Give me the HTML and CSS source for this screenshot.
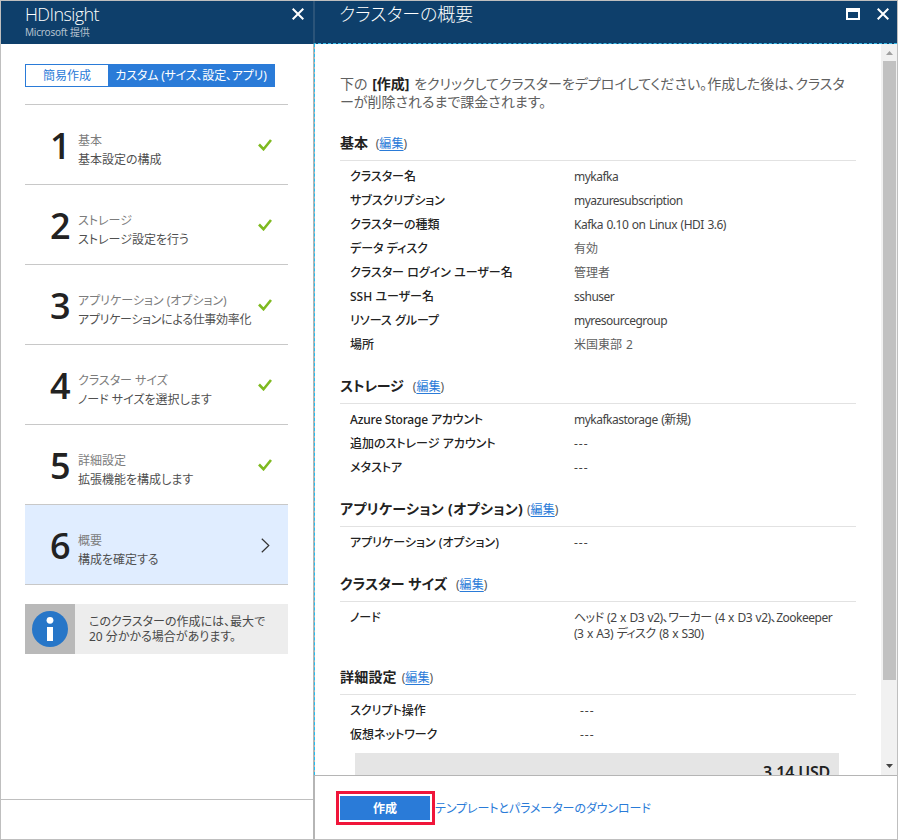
FILE: index.html
```html
<!DOCTYPE html>
<html lang="ja">
<head>
<meta charset="utf-8">
<title>HDInsight</title>
<link rel="stylesheet" href="styles.css">
</head>
<body>
<div class="portal">
  <aside class="wizard">
    <header class="bar">
      <div>
        <h1 class="latin-title">HDInsight</h1>
        <p class="publisher">Microsoft 提供</p>
      </div>
      <svg class="close" width="12" height="12" viewBox="0 0 12 12"><path d="M.7.7l10.6 10.6M11.3.7L.7 11.3"/></svg>
    </header>
    <div class="wizard-body">
      <div class="tabs"><span class="tab">簡易作成</span><span class="tab on">カスタム (サイズ、設定、アプリ)</span></div>
      <ol class="steps">
        <li class="step"><b>1</b><div><p>基本</p><p class="desc">基本設定の構成</p></div><svg class="check" width="14" height="12" viewBox="0 0 14 12"><path d="M1 5.5l4.5 4.7L13 1"/></svg></li>
        <li class="step"><b>2</b><div><p>ストレージ</p><p class="desc">ストレージ設定を行う</p></div><svg class="check" width="14" height="12" viewBox="0 0 14 12"><path d="M1 5.5l4.5 4.7L13 1"/></svg></li>
        <li class="step"><b>3</b><div><p>アプリケーション (オプション)</p><p class="desc long">アプリケーションによる仕事効率化</p></div><svg class="check" width="14" height="12" viewBox="0 0 14 12"><path d="M1 5.5l4.5 4.7L13 1"/></svg></li>
        <li class="step"><b>4</b><div><p>クラスター サイズ</p><p class="desc">ノード サイズを選択します</p></div><svg class="check" width="14" height="12" viewBox="0 0 14 12"><path d="M1 5.5l4.5 4.7L13 1"/></svg></li>
        <li class="step"><b>5</b><div><p>詳細設定</p><p class="desc">拡張機能を構成します</p></div><svg class="check" width="14" height="12" viewBox="0 0 14 12"><path d="M1 5.5l4.5 4.7L13 1"/></svg></li>
        <li class="step current"><b>6</b><div><p>概要</p><p class="desc">構成を確定する</p></div><svg class="chevron" width="9" height="15" viewBox="0 0 9 15"><path d="M.8.8l7 6.7-7 6.7"/></svg></li>
      </ol>
      <div class="notice">
        <div class="notice-icon"><svg width="36" height="36" viewBox="0 0 36 36"><circle cx="18" cy="18" r="18" fill="#2776c8"/><circle cx="18" cy="9.3" r="3.4" fill="#fff"/><path d="M15 16h6v14h-6z" fill="#fff"/></svg></div>
        <p>このクラスターの作成には、最大で<br>20 分かかる場合があります。</p>
      </div>
    </div>
    <footer class="wizard-foot"></footer>
  </aside>
  <main class="summary">
    <header class="bar">
      <h1>クラスターの概要</h1>
      <div class="controls">
        <svg width="14" height="12" viewBox="0 0 14 12"><path fill="#fff" fill-rule="evenodd" d="M0 0h14v12H0zM2 4v6h10V4z"/></svg>
        <svg class="close" width="12" height="12" viewBox="0 0 12 12"><path d="M.7.7l10.6 10.6M11.3.7L.7 11.3"/></svg>
      </div>
    </header>
    <div class="scroller">
      <div class="content">
        <p class="intro">下の <strong>[作成]</strong> をクリックしてクラスターをデプロイしてください。作成した後は、クラスタ<br>ーが削除されるまで課金されます。</p>
        <section>
          <h2 class="basics">基本 <span>(<a>編集</a>)</span></h2>
          <dl>
            <dt>クラスター名</dt><dd class="id">mykafka</dd>
            <dt>サブスクリプション</dt><dd class="id">myazuresubscription</dd>
            <dt>クラスターの種類</dt><dd>Kafka 0.10 on Linux (HDI 3.6)</dd>
            <dt>データ ディスク</dt><dd class="kanji">有効</dd>
            <dt>クラスター ログイン ユーザー名</dt><dd class="kanji">管理者</dd>
            <dt>SSH ユーザー名</dt><dd class="id">sshuser</dd>
            <dt>リソース グループ</dt><dd class="id">myresourcegroup</dd>
            <dt>場所</dt><dd class="kanji">米国東部 2</dd>
          </dl>
        </section>
        <section>
          <h2 class="storage">ストレージ <span>(<a>編集</a>)</span></h2>
          <dl>
            <dt class="mixed">Azure Storage アカウント</dt><dd>mykafkastorage (新規)</dd>
            <dt>追加のストレージ アカウント</dt><dd class="none">---</dd>
            <dt>メタストア</dt><dd class="none">---</dd>
          </dl>
        </section>
        <section>
          <h2 class="apps">アプリケーション (オプション) <span>(<a>編集</a>)</span></h2>
          <dl>
            <dt>アプリケーション (オプション)</dt><dd class="none">---</dd>
          </dl>
        </section>
        <section>
          <h2 class="size">クラスター サイズ <span>(<a>編集</a>)</span></h2>
          <dl class="nodes">
            <dt>ノード</dt><dd>ヘッド (2 x D3 v2)、ワーカー (4 x D3 v2)、Zookeeper<br>(3 x A3) ディスク (8 x S30)</dd>
          </dl>
        </section>
        <section>
          <h2 class="details">詳細設定 <span>(<a>編集</a>)</span></h2>
          <dl class="advanced">
            <dt>スクリプト操作</dt><dd class="none">---</dd>
            <dt>仮想ネットワーク</dt><dd class="none">---</dd>
          </dl>
        </section>
        <div class="price">3.14 USD</div>
      </div>
      <div class="scrollbar">
        <svg width="7" height="4" viewBox="0 0 7 4"><path d="M3.5 0L7 4H0z" fill="#a0a0a0"/></svg>
        <i></i>
        <svg width="7" height="4" viewBox="0 0 7 4"><path d="M0 0h7L3.5 4z" fill="#444"/></svg>
      </div>
    </div>
    <footer class="actions">
      <div class="highlight"><button>作成</button></div>
      <a>テンプレートとパラメーターのダウンロード</a>
    </footer>
  </main>
</div>
</body>
</html>
```
FILE: styles.css
```css
* { box-sizing: border-box; margin: 0; padding: 0; }
body {
  width: 898px; height: 840px; overflow: hidden; background: #fff; color: #484848;
  font: 12px/16px "Noto Sans", "Noto Sans CJK JP", sans-serif;
  font-feature-settings: "palt";
}
.portal { display: flex; height: 840px; border: 1px solid #bfbfbf; }
.wizard { width: 312px; display: flex; flex-direction: column; }
.summary { flex: 1; display: flex; flex-direction: column; border-left: 2px solid #b5b5b5; }
.bar { height: 43px; background: #0e3f6b; color: #fff; display: flex; justify-content: space-between; flex: none; }
.wizard .bar { padding: 3px 9px 0 24px; }
.wizard .bar .close { margin-top: 4px; }
.bar h1 { font-size: 18px; line-height: 21px; font-weight: 300; }
.bar .latin-title { font-family: "Open Sans", sans-serif; letter-spacing: -.6px; }
.publisher { font-size: 10px; line-height: 14px; color: #b4c1ce; letter-spacing: -.2px; }
.close path { fill: none; stroke: #fff; stroke-width: 2; }
.wizard-body { flex: 1; padding: 20px 25px 0 24px; }
.tabs { display: flex; width: 250px; height: 23px; border: 1px solid #2a7bd8; line-height: 21px; color: #2a7bd8; text-align: center; }
.tab { width: 82px; white-space: nowrap; }
.tab.on { flex: 1; background: #2a7bd8; color: #fff; letter-spacing: -.2px; }
.steps { list-style: none; margin-top: 17px; border-bottom: 1px solid #c8c8c8; }
.step { height: 80px; border-top: 1px solid #c8c8c8; display: flex; position: relative; padding: 26px 0 0 25px; }
.step b { width: 28px; margin-top: -1px; font: 600 36px/32px "Open Sans", sans-serif; letter-spacing: -1px; color: #222; }
.step p { line-height: 19px; color: #7c7c7c; white-space: nowrap; }
.step .desc { color: #505050; }
.step .long { letter-spacing: -.3px; }
.step svg { position: absolute; right: 16px; top: 34px; }
.step .chevron { right: 18px; top: 33px; }
.check path { fill: none; stroke: #7fba20; stroke-width: 2.6; }
.chevron path { fill: none; stroke: #333; stroke-width: 1.2; }
.current { background: #e0edff; }
.notice { display: flex; height: 50px; margin-top: 19px; background: #ededed; }
.notice-icon { width: 50px; background: #b9b9b9; display: grid; place-items: center; }
.notice p { padding: 10px 0 0 14px; line-height: 15px; white-space: nowrap; }
.wizard-foot { height: 40px; border-top: 1px solid #bfbfbf; }
.summary .bar { margin-left: -2px; padding: 3px 8px 0 24px; border-left: 2px solid #2b5479; border-bottom: 1px dashed #35b9e9; }
.controls { display: flex; gap: 17px; padding-top: 4px; }
.scroller { height: 731px; display: flex; overflow: hidden; margin-left: -1px; border-left: 1px dashed #1fc0f5; }
.content { flex: 1; padding: 31px 25px 0; }
.intro { font-size: 14px; line-height: 18px; height: 58px; color: #606060; white-space: nowrap; }
.intro strong { color: #222; margin: 0 1px; }
section { margin-bottom: 15px; }
h2 { height: 28px; border-bottom: 1px solid #e2e2e2; font-size: 14px; line-height: 20px; color: #222; white-space: pre; }
h2 span { font-size: 12px; font-weight: 400; color: #555; letter-spacing: .1px; }
.basics span { margin-left: 4px; }
.storage { letter-spacing: -.3px; }
.storage span { margin-left: 6px; }
.apps { letter-spacing: .3px; }
.apps span { margin-left: 0; }
.size span { margin-left: 5px; }
.details { letter-spacing: .2px; }
.details span { margin-left: 1px; }
a { color: #2a7bd8; }
h2 a { text-decoration: underline; text-underline-offset: 2px; }
dl { display: grid; grid-template-columns: 224px 1fr; grid-auto-rows: 24px; padding: 8px 0 0 10px; white-space: nowrap; }
dt { color: #222; font-weight: 500; }
dt.mixed { letter-spacing: -.2px; }
dd { color: #444; letter-spacing: -.5px; word-spacing: .9px; }
dd.id { letter-spacing: -.5px; }
dd.kanji { color: #606060; letter-spacing: 0; }
dd.none { letter-spacing: 1px; }
.nodes { grid-auto-rows: 42px; }
.advanced dd { padding-left: 6px; }
.price { height: 44px; margin: -13px 17px 0 15px; padding: 8px 9px; background: #e5e5e5; color: #222; text-align: right; font-size: 16px; line-height: 22px; font-weight: 600; letter-spacing: -.2px; }
.scrollbar { width: 16px; background: #f1f1f1; display: flex; flex-direction: column; align-items: center; padding: 7px 0; }
.scrollbar i { width: 13px; height: 619px; background: #c1c1c1; margin: 6px 0 auto; }
.actions { height: 64px; border-top: 1px solid #b5b5b5; display: flex; align-items: center; padding: 1px 0 0 21px; }
.highlight { width: 99px; height: 34px; border: 3px solid #f0163a; padding: 2px 2px 2px 1px; flex: none; }
button { width: 90px; height: 24px; display: block; border: 0; background: #2a7bd8; color: #fff; font: 700 12px/24px "Noto Sans CJK JP", sans-serif; }
.actions a { white-space: nowrap; letter-spacing: -.08px; padding-top: 1px; }
```
